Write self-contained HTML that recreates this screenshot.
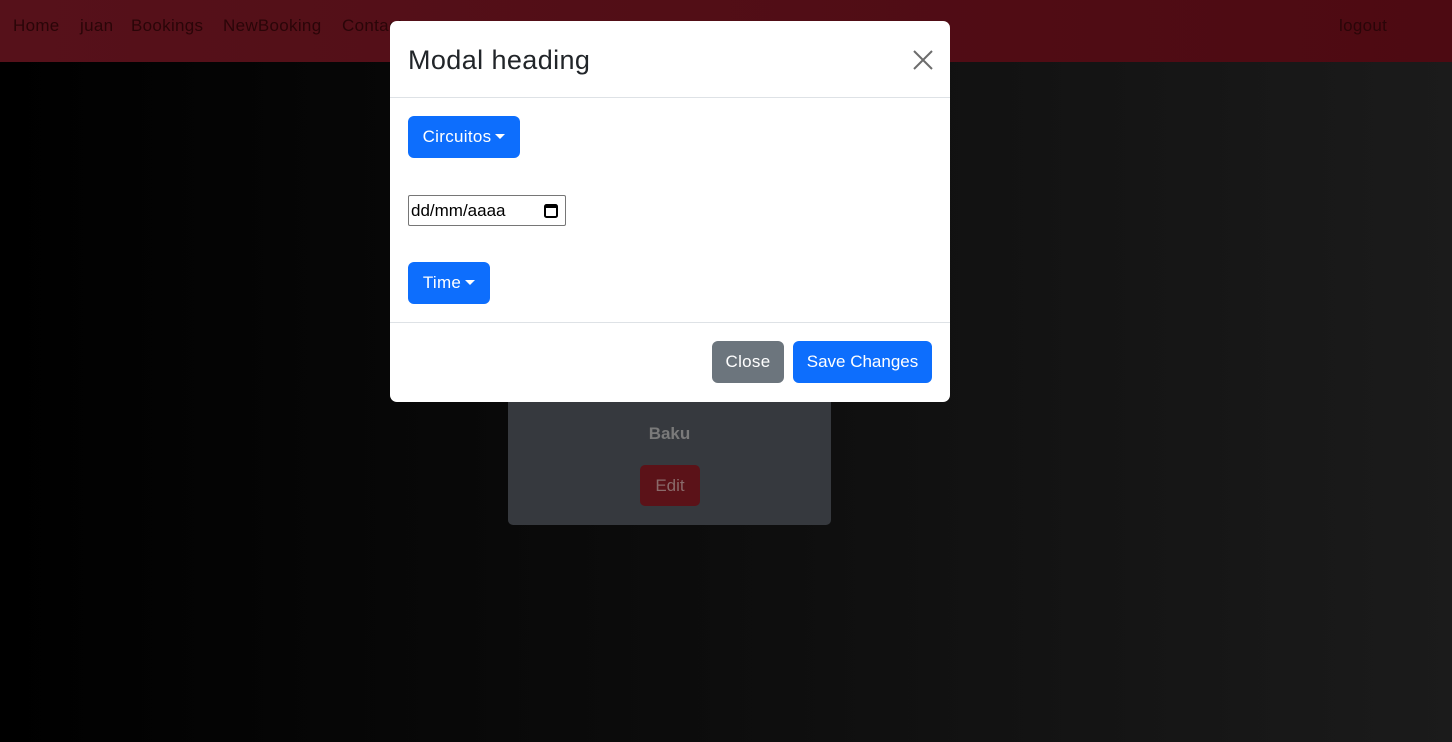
<!DOCTYPE html>
<html><head><style>
body{margin:0;width:1452px;height:742px;overflow:hidden;background:linear-gradient(90deg,#000 0%,#0d0d0d 50%,#1b1b1b 100%);font-family:"Liberation Sans",sans-serif;position:relative}
.nav{position:absolute;left:0;top:0;width:1452px;height:62px;background:linear-gradient(90deg,#56111a,#4d0a12)}
.nav span{position:absolute;top:16px;font-size:17px;color:#2a0508;letter-spacing:0.3px}
.card{position:absolute;left:508px;top:300px;width:323px;height:225px;background:#36393e;border-radius:5px}
.modal{position:absolute;left:390px;top:21px;width:560px;height:381px;background:#fff;border-radius:7px}
.btn{position:absolute;background:#0d6efd;color:#fff;border-radius:6px;font-size:17px;line-height:42px;height:42px;padding:0;text-align:center;white-space:nowrap;box-sizing:border-box;letter-spacing:0.3px}
.caret{display:inline-block;border-left:5px solid transparent;border-right:5px solid transparent;border-top:5px solid #fff;vertical-align:3px;margin-left:4px}
</style></head><body>
<div class="nav">
<span style="left:13px">Home</span><span style="left:80px">juan</span><span style="left:131px">Bookings</span><span style="left:223px">NewBooking</span><span style="left:342px">Contact</span><span style="left:1339px">logout</span>
</div>
<div class="card">
<div style="position:absolute;top:124px;width:100%;text-align:center;color:#7a7a7a;font-weight:bold;font-size:17px">Baku</div>
<div style="position:absolute;left:132px;top:165px;width:60px;height:41px;background:#5b1218;border-radius:5px;color:#8a6a6a;text-align:center;line-height:41px;font-size:17px">Edit</div>
</div>
<div class="modal">
<div style="position:absolute;left:18px;top:24px;font-size:27px;color:#212529;letter-spacing:0.4px">Modal heading</div>
<svg style="position:absolute;left:522px;top:28px" width="22" height="22"><path d="M2 2L20 20M20 2L2 20" stroke="#6c6c6c" stroke-width="2"/></svg>
<div style="position:absolute;top:76px;left:0;width:560px;height:1px;background:#dee2e6"></div>
<div class="btn" style="left:18px;top:95px;width:112px">Circuitos<span class="caret"></span></div>
<div style="position:absolute;left:18px;top:174px;width:154px;height:29px;border:1px solid #767676;border-radius:2px;font-size:17px;line-height:29px;padding-left:2px;color:#000">dd/mm/aaaa
<svg style="position:absolute;left:135px;top:7px" width="14" height="15"><rect x="1" y="2" width="12" height="12" rx="1.5" fill="none" stroke="#000" stroke-width="2"/><rect x="1" y="2" width="12" height="3" fill="#000"/></svg></div>
<div class="btn" style="left:18px;top:241px;width:82px">Time<span class="caret"></span></div>
<div style="position:absolute;top:301px;left:0;width:560px;height:1px;background:#dee2e6"></div>
<div class="btn" style="left:322px;top:320px;width:72px;background:#6c757d">Close</div>
<div class="btn" style="left:403px;top:320px;width:139px;letter-spacing:0">Save Changes</div>
</div>
</body></html>
